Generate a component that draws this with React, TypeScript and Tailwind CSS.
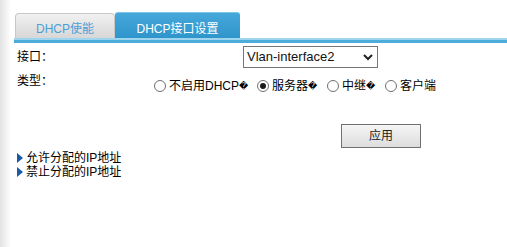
import React from 'react';

const FONT = "font-['Liberation_Sans','Noto_Sans_CJK_SC',sans-serif]";

// 单选项：固定宽度以对齐参考图中各选项的起点
const Radio: React.FC<{ label: string; checked?: boolean; bad?: boolean; w: string }> = ({ label, checked, bad, w }) => (
  <div className={`flex items-center ${w}`}>
    <span className="mr-[3px] flex h-[12px] w-[12px] items-center justify-center rounded-full border border-[#6f6f6f] bg-white">
      {checked && <span className="h-[6px] w-[6px] rounded-full bg-[#1a1a1a]" />}
    </span>
    <span>{label}</span>
    {bad && <span className="font-['DejaVu_Sans',sans-serif] text-[9px]">{'\uFFFD'}</span>}
  </div>
);

const LinkRow: React.FC<{ text: string }> = ({ text }) => (
  <div className="flex h-[14px] items-center">
    <svg width="6" height="10" viewBox="0 0 6 10" className="mr-[3px]">
      <polygon points="0,0 6,5 0,10" fill="#1b5aa6" />
    </svg>
    <span>{text}</span>
  </div>
);

export default function App() {
  return (
    <div className={`flex h-[247px] w-[507px] bg-white text-[12px] leading-[16px] text-black ${FONT}`}>
      {/* 左侧渐变边 */}
      <div className="w-[11px] bg-gradient-to-r from-[#e2e2e2] to-white" />

      <div className="flex flex-1 flex-col pl-[3px] pt-[12px]">
        {/* 标签页 */}
        <div className="flex h-[26px] items-end">
          <div className="ml-[1px] flex h-[25px] w-[100px] items-end justify-center rounded-t-[4px] border border-b-0 border-[#c8c8c8] bg-gradient-to-b from-[#f1f1f1] to-[#d7d7d7] pb-[1px] text-[#4a9fd8]">
            DHCP使能
          </div>
          <div className="flex h-[26px] w-[125px] items-end justify-center rounded-t-[3px] border-t border-[#7cc4e8] bg-gradient-to-b from-[#46a7da] to-[#2e95cb] pb-[1px] text-white">
            DHCP接口设置
          </div>
        </div>
        <div className="h-[5px] border-t-2 border-[#9fd4ee] bg-[#4caddb]" />

        <div className="flex flex-col pl-[3px]">
          {/* 接口 */}
          <div className="mt-[3px] flex h-[22px] items-center">
            <div className="w-[226px]">接口：</div>
            <div className="flex h-[22px] w-[135px] items-center justify-between border border-[#767676] bg-white pl-[3px] pr-[4px] text-[13px] text-[#111]">
              <span>Vlan-interface2</span>
              <svg width="10" height="7" viewBox="0 0 10 7">
                <polyline points="1,1 5,5 9,1" fill="none" stroke="#222" strokeWidth="2" />
              </svg>
            </div>
          </div>

          {/* 类型 */}
          <div className="flex items-start">
            <div className="w-[137px] pt-[5px]">类型：</div>
            <div className="mt-[10px] flex items-center">
              <Radio label="不启用DHCP" bad w="w-[103px]" />
              <Radio label="服务器" checked bad w="w-[70px]" />
              <Radio label="中继" bad w="w-[58px]" />
              <Radio label="客户端" w="w-[60px]" />
            </div>
          </div>

          <div className="mt-[30px] pl-[324px]">
            <button className="h-[24px] w-[80px] border border-[#707070] bg-gradient-to-b from-[#f5f5f5] to-[#dddddd] text-[12px] text-[#222]">
              应用
            </button>
          </div>

          <div className="mt-[3px]">
            <LinkRow text="允许分配的IP地址" />
            <LinkRow text="禁止分配的IP地址" />
          </div>
        </div>
      </div>
    </div>
  );
}
